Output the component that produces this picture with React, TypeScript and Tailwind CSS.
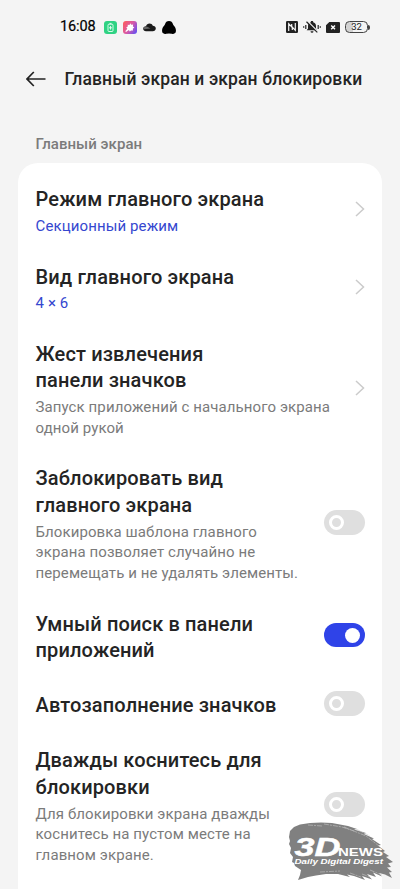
import { clsx } from 'clsx';

type Row = {
  title: string[];
  value?: string;
  description?: string[];
  on?: boolean;
};

const ROWS: Row[] = [
  { title: ['Режим главного экрана'], value: 'Секционный режим' },
  { title: ['Вид главного экрана'], value: '4 × 6' },
  {
    title: ['Жест извлечения', 'панели значков'],
    description: ['Запуск приложений с начального экрана', 'одной рукой'],
  },
  {
    title: ['Заблокировать вид', 'главного экрана'],
    description: ['Блокировка шаблона главного', 'экрана позволяет случайно не', 'перемещать и не удалять элементы.'],
    on: false,
  },
  { title: ['Умный поиск в панели', 'приложений'], on: true },
  { title: ['Автозаполнение значков'], on: false },
  {
    title: ['Дважды коснитесь для', 'блокировки'],
    description: ['Для блокировки экрана дважды', 'коснитесь на пустом месте на', 'главном экране.'],
    on: false,
  },
];

function StatusBar() {
  return (
    <div className="flex h-[54px] shrink-0 items-center justify-between pl-[60px] pr-[30px]">
      <div className="flex items-center">
        <span className="w-[44px] text-[14.5px] leading-5 tracking-[-0.1px] text-black [-webkit-text-stroke:0.2px_#000]">16:08</span>
        {/* Battery app */}
        <svg width="13" height="13" viewBox="0 0 13 13">
          <rect width="13" height="13" rx="3" fill="#2fd283" />
          <rect x="4" y="3.2" width="5" height="7.3" rx="1" fill="none" stroke="#e9fff4" strokeWidth="0.9" />
          <path d="M5.5 2.4h2M6.5 5v3.6M5 6.8h3" stroke="#e9fff4" strokeWidth="0.9" />
        </svg>
        {/* Gallery app */}
        <svg className="ml-[6px]" width="14" height="13" viewBox="0 0 14 13">
          <defs>
            <linearGradient id="gallery" x1="0" y1="0.2" x2="1" y2="0.8">
              <stop offset="0" stopColor="#fb5b62" />
              <stop offset="0.5" stopColor="#d85aa8" />
              <stop offset="1" stopColor="#674ff0" />
            </linearGradient>
          </defs>
          <rect width="14" height="13" rx="3" fill="url(#gallery)" />
          <path d="m7.2 2.3 1 1.5 1.9-.2-.2 2 1.4 1-1.5 1.1.2 1.8-2-.1-1.2 1-.9-1.3L3 11l-.7-.8 2-2.4-1.1-1.2 1.6-1-.1-1.8 1.8.1z" fill="#fff" />
        </svg>
        {/* Cloud */}
        <svg className="ml-[6px]" width="13" height="9" viewBox="0 0 13 9">
          <path d="M3 3.2C3.4 1.3 5 .5 6.500.5s2.800.9 3.300 2.300c1.700 0 3 1.200 3 2.600 0 1.600-1.300 2.800-3 2.800H3C1.400 8.200.2 7.100.2 5.700.2 4.400 1.300 3.300 3 3.200z" fill="#1b1b1b" />
          <path d="M.4 5C1.6 3.400 3.500 3 5.300 4.200L7.500 5.500 1 6.200z" fill="#666" />
        </svg>
        {/* Assistant silhouette */}
        <svg className="ml-[6px]" width="14" height="13" viewBox="0 0 14 13">
          <path d="M7 0c2.200 0 3.400 1.100 3.800 2.800.3 1 .7 1.700 1.300 2.300 1 .9 1.600 2.200 1.800 3.900.2 2-.5 3.200-1.800 3.400-.8.500-1.700.6-2.500.400L7 12.500l-2.600.3c-.8.200-1.700.1-2.500-.4C.6 12.200-.1 11 .1 9c.2-1.700.8-3 1.800-3.900.6-.6 1-1.300 1.300-2.300C3.600 1.100 4.800 0 7 0z" fill="#000" />
        </svg>
      </div>
      <div className="flex items-center">
        {/* NFC */}
        <svg width="12" height="12" viewBox="0 0 12 12">
          <rect width="12" height="12" rx="1.2" fill="#222" />
          <path d="M2.7 10V2.700L6.300 6.500V9M9.300 2v7.300L5.700 5.500V3" fill="none" stroke="#f4f4f4" strokeWidth="1.2" />
        </svg>
        {/* Muted and vibrating bell */}
        <svg className="ml-[5px]" width="18" height="14" viewBox="0 0 18 14">
          <path d="M3.700 10.200 5 8.500V6c0-2 1.200-3.300 2.900-3.700V1h2.200v1.300C11.800 2.700 13 4 13 6v2.500l1.300 1.700z" fill="#222" />
          <path d="M7.500 11.200h3a1.500 1.500 0 0 1-3 0z" fill="#222" />
          <path d="M5 1.800 15 11.800" stroke="#f4f4f4" strokeWidth="1.4" />
          <path d="M3.500 1.700 14.300 12.400" stroke="#222" strokeWidth="1.2" />
          <path d="M2.800 5v4M15.200 5v4M.7 6.200v1.600M17.300 6.200v1.600" stroke="#222" strokeWidth="1.2" />
        </svg>
        {/* No SIM */}
        <svg className="ml-[5px]" width="14" height="11" viewBox="0 0 14 11">
          <path d="M3.300 0H13a1 1 0 0 1 1 1v9a1 1 0 0 1-1 1H1a1 1 0 0 1-1-1V3.300z" fill="#222" />
          <path d="m5.200 3.500 3.800 3.800M9 3.500 5.200 7.300" stroke="#fff" strokeWidth="1.4" />
        </svg>
        <div className="ml-[5.5px] mr-[0.5px] flex items-center">
          <div className="flex h-[12px] w-[23px] items-center justify-center rounded-[4.5px] border border-[#444] bg-[linear-gradient(90deg,#d2d2d2_32%,#f4f4f4_32%)] text-[9.5px] leading-none text-[#222]">
            32
          </div>
          <div className="h-[5px] w-[1.5px] rounded-r-sm bg-[#444]" />
        </div>
      </div>
    </div>
  );
}

function Header() {
  return (
    <header className="flex h-[50px] shrink-0 items-center pl-[26px]">
      <svg width="20" height="16" viewBox="0 0 20 16" fill="none" stroke="#222" strokeWidth="1.7">
        <path d="M7.8 1 1 8l6.8 7M1 8h18.500" />
      </svg>
      <h1 className="ml-[18.5px] whitespace-nowrap text-[17.5px] font-medium leading-6 tracking-[0.13px]">
        Главный экран и экран блокировки
      </h1>
    </header>
  );
}

function Toggle({ on }: { on: boolean }) {
  return (
    <span
      className={clsx(
        '-mt-[4px] flex h-[24.5px] w-[40.5px] items-center rounded-full',
        on ? 'justify-end bg-[#2f43e8] pr-[5px]' : 'justify-start bg-[#dfdfdf] pl-[5px]',
      )}
    >
      <span className={clsx('size-[15px] rounded-full', on ? 'bg-white' : 'border-[3px] border-white')} />
    </span>
  );
}

function Chevron() {
  return (
    <svg className="-mt-[4px]" width="10" height="16" viewBox="0 0 10 16" fill="none" stroke="#cbcbcb" strokeWidth="1.5">
      <path d="m1 1 7.500 7L1 15" />
    </svg>
  );
}

function SettingRow({ row }: { row: Row }) {
  const hasText = row.value || row.description;
  return (
    <div className={clsx('flex items-center justify-between', hasText ? 'pb-[26.9px]' : 'pb-[28.8px]')}>
      <div className="whitespace-nowrap">
        <h2 className="text-[20px] font-medium leading-[26.4px] tracking-[0.14px]">
          {row.title.map((line) => (
            <span key={line} className="block">{line}</span>
          ))}
        </h2>
        {row.value && <p className="mt-[3.4px] text-[15px] leading-[20.7px] tracking-[0.12px] text-[#3547cf]">{row.value}</p>}
        {row.description && (
          <p className="mt-[3.4px] text-[15px] leading-[20.7px] tracking-[0.1px] text-[#7b7b7b]">
            {row.description.map((line) => (
              <span key={line} className="block">{line}</span>
            ))}
          </p>
        )}
      </div>
      {row.on === undefined ? <Chevron /> : <Toggle on={row.on} />}
    </div>
  );
}

function Watermark() {
  return (
    <svg className="absolute left-[286px] top-[820px]" width="110" height="64" viewBox="0 0 110 64">
      <path
        d="M3 17 4 11 8 7 14 4.500 24 3 35 2.500 46 3 54 4.500 62 6 71 9 68 9.500 80 13 78 14 88 18.500 86 19 95 25 92 25.500 99 31 97 32 103 36 100 37 107 42 102 43.500 105 47 101 47.500 106 52 103 52.500 106 58 99 54.500 93 53 96 56.500 87 52.500 90 57 81 54 86 59.500 76 56 79 60 68 56 61 54.500 64 57 52 54 40 54 30 55.500 22 57 12 60 14 55 15 50 12 48 9 46 8 43 6 42 7 37 4 33 5 28 3 24 4 21z"
        fill="#808080"
      />
      <path d="m58 7 22 9 13 10M38 4l18 3 12 4M70 9l14 7M22 5l14 1M76 54l8 3M64 53l11 4M84 50l12 5M34 52l20-1" stroke="#c4c4c4" strokeWidth="0.6" strokeDasharray="5 1 2 1" fill="none" />
      <g fill="#fff" fontFamily="Liberation Sans, sans-serif" fontWeight="700">
        <text x="8.5" y="35.5" fontSize="26.5" fontStyle="italic" stroke="#fff" strokeWidth="0.5" textLength="46" lengthAdjust="spacingAndGlyphs">3D</text>
        <text x="52" y="35.5" fontSize="11" textLength="45" lengthAdjust="spacingAndGlyphs">NEWS</text>
        <text x="8.5" y="43.700" fontSize="8" fontStyle="italic" textLength="88.5" lengthAdjust="spacingAndGlyphs">Daily Digital Digest</text>
      </g>
    </svg>
  );
}

export default function App() {
  return (
    <div className="relative flex h-[889px] w-[400px] flex-col overflow-hidden bg-[#f4f4f4] font-[Roboto,sans-serif] text-[#242424]">
      <StatusBar />
      <Header />
      <p className="mt-[30px] shrink-0 pl-[35.5px] text-[15px] font-medium leading-5 tracking-[0.05px] text-[#7b7b7b]">Главный экран</p>
      <main className="mx-[18px] mt-[9px] min-h-0 flex-1 rounded-t-[20px] bg-white px-[17.5px] pt-[23.2px]">
        {ROWS.map((row) => (
          <SettingRow key={row.title[0]} row={row} />
        ))}
      </main>
      <Watermark />
    </div>
  );
}
